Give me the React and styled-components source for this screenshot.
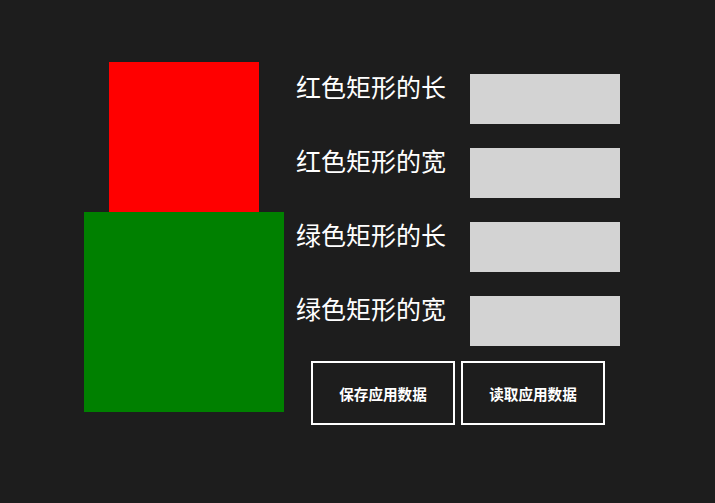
import React from "react";
import styled, { createGlobalStyle } from "styled-components";

const GlobalStyle = createGlobalStyle`
  html, body {
    margin: 0;
    padding: 0;
    background: #1d1d1d;
  }
  body {
    font-family: "Noto Sans CJK SC", "Microsoft YaHei", sans-serif;
  }
`;

const Page = styled.div`
  width: 715px;
  height: 503px;
  background: #1d1d1d;
  display: flex;
  align-items: flex-start;
  padding: 62px 0 0 84px;
  box-sizing: border-box;
`;

const Shapes = styled.div`
  width: 200px;
  display: flex;
  flex-direction: column;
  align-items: center;
`;

const Rect = styled.div`
  width: ${(p) => p.size}px;
  height: ${(p) => p.size}px;
  background: ${(p) => p.color};
`;

const Form = styled.div`
  margin-left: 12px;
  padding-top: 12px;
  display: flex;
  flex-direction: column;
  gap: 24px;
`;

const Row = styled.div`
  display: flex;
  align-items: flex-start;
`;

const Label = styled.label`
  width: 174px;
  color: #ffffff;
  font-size: 25px;
  line-height: 28px;
  margin-top: -2px;
  white-space: nowrap;
`;

const Field = styled.input`
  width: 150px;
  height: 50px;
  box-sizing: border-box;
  border: none;
  outline: none;
  background: #d3d3d3;
  padding: 0 8px;
  font-size: 16px;
`;

const Buttons = styled.div`
  display: flex;
  gap: 6px;
  margin-top: -9px;
  padding-left: 15px;
`;

const Button = styled.button`
  width: 144px;
  height: 64px;
  box-sizing: border-box;
  border: 2px solid #ffffff;
  background: transparent;
  color: #ffffff;
  font-family: "Noto Sans CJK SC", "Microsoft YaHei", sans-serif;
  font-size: 14.6px;
  font-weight: 700;
  cursor: pointer;
`;

const fields = ["红色矩形的长", "红色矩形的宽", "绿色矩形的长", "绿色矩形的宽"];

export default function App() {
  return (
    <>
      <GlobalStyle />
      <Page>
        <Shapes>
          <Rect size={150} color="#ff0000" />
          <Rect size={200} color="#008000" />
        </Shapes>
        <Form>
          {fields.map((f) => (
            <Row key={f}>
              <Label>{f}</Label>
              <Field />
            </Row>
          ))}
          <Buttons>
            <Button>保存应用数据</Button>
            <Button>读取应用数据</Button>
          </Buttons>
        </Form>
      </Page>
    </>
  );
}
